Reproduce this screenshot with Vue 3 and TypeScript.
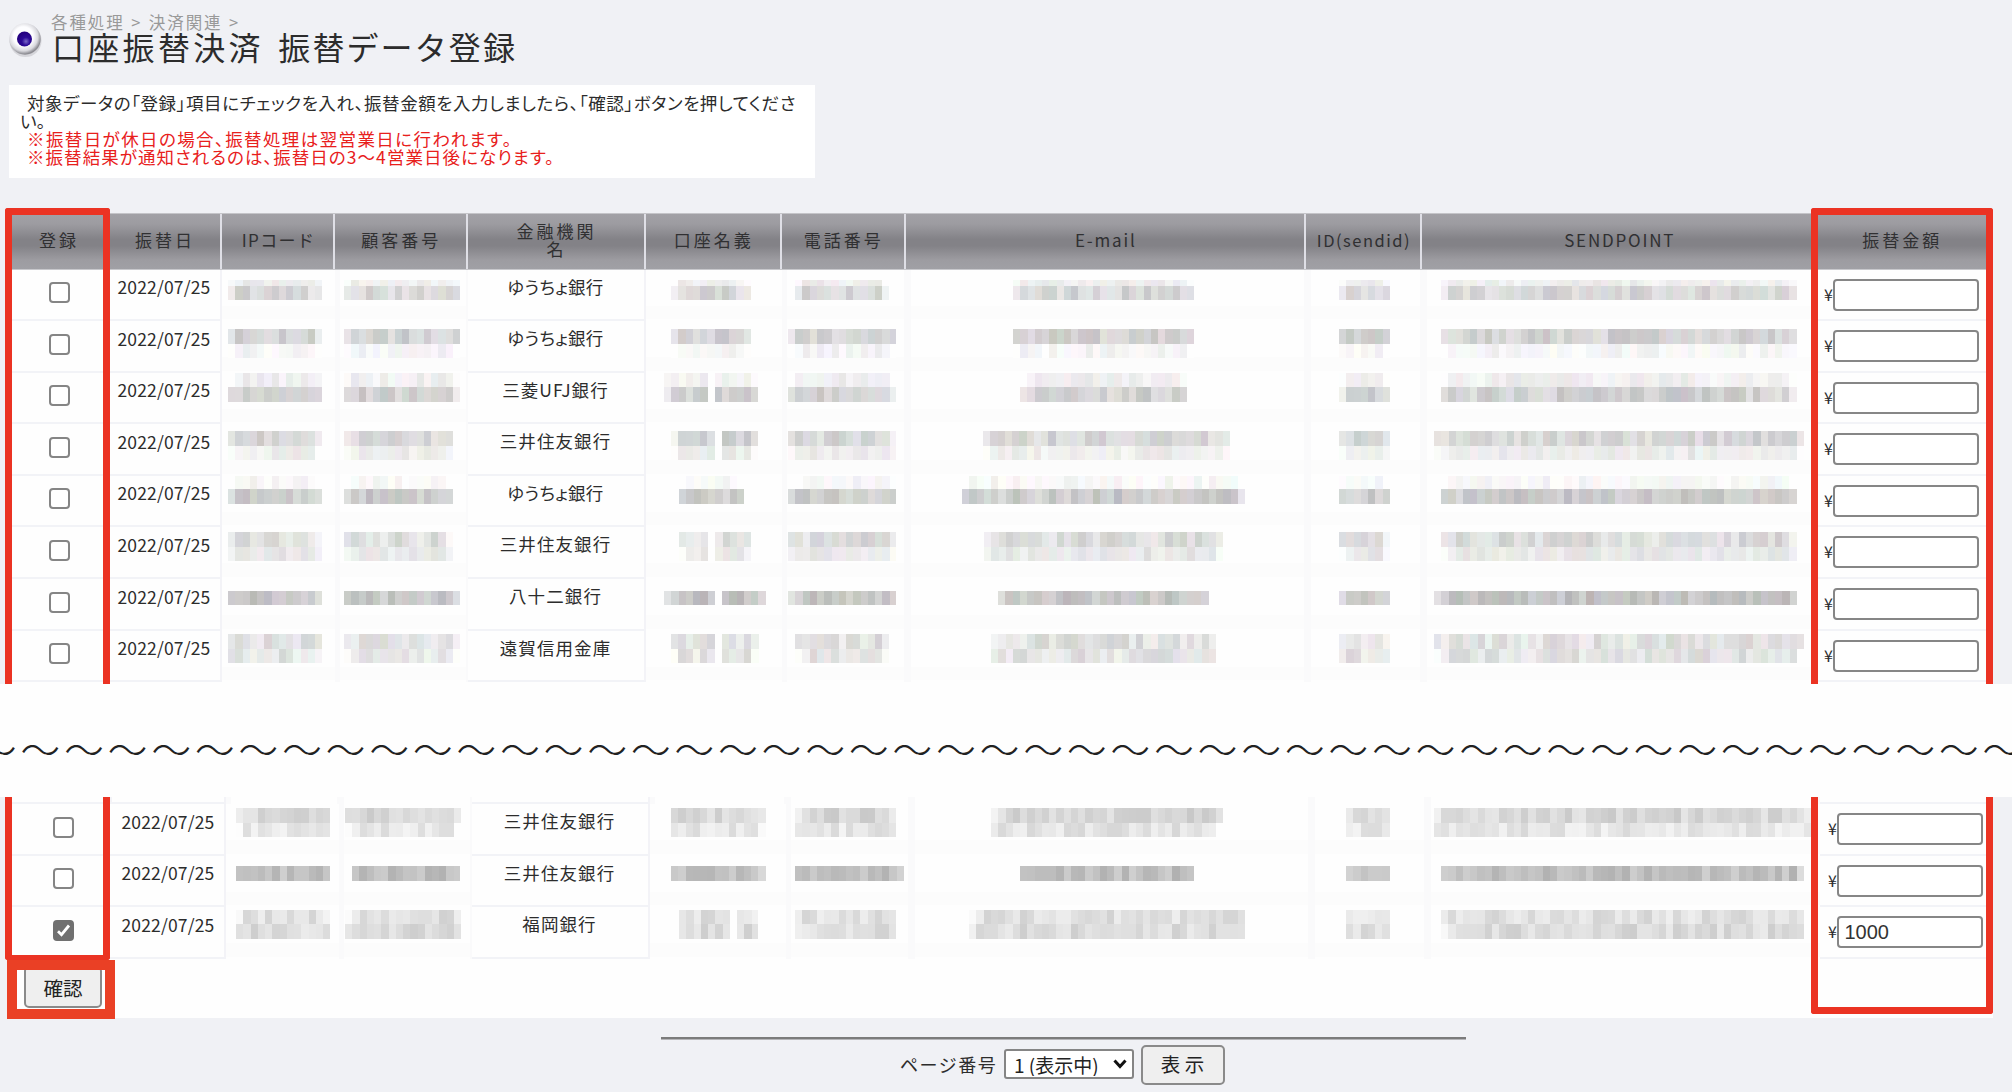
<script setup lang="ts">
import { ref } from 'vue'

type Strip = [start: number, cells: number, gap?: number]
interface Row {
  date: string
  bank: string
  checked: boolean
  amount: string
  offset: number
  bands: [height: number, level: number][]
  strips: Strip[]
}

const CELL = 7.26
const headers = ['登録', '振替日', 'IPコード', '顧客番号', '金融機関名', '口座名義', '電話番号', 'E-mail', 'ID(sendid)', 'SENDPOINT', '振替金額']
const stripEdges = [222, 335, 645.5, 782, 905.5, 1306, 1422]

const row = (bank: string, offset: number, bands: [number, number][], strips: Strip[], amount = ''): Row => ({
  date: '2022/07/25', bank, checked: amount !== '', amount, offset: Math.max(0, offset - 1), bands, strips,
})

const upper = ref<Row[]>([
  row('ゆうちょ銀行', 11.5, [[5.5, 238], [14.5, 216]], [[228, 13], [344.3, 16], [671.3, 11], [794.7, 13], [1012.5, 25], [1339, 7], [1441, 49]]),
  row('ゆうちょ銀行', 9, [[14.5, 211], [14.5, 245]], [[228, 13], [344.3, 16], [671.3, 11], [787.5, 15], [1012.5, 25], [1339, 7], [1441, 49]]),
  row('三菱UFJ銀行', 1.2, [[14.5, 240], [14.5, 211]], [[228, 13], [344.3, 16], [664, 13, 6], [787.5, 15], [1019.6, 23], [1339, 7], [1441, 49]]),
  row('三井住友銀行', 7.9, [[14.5, 215], [14.5, 237]], [[228, 13], [344.3, 15], [671.3, 12, 6], [787.5, 15], [983, 34], [1339, 7], [1433.6, 51]]),
  row('ゆうちょ銀行', 0.5, [[13.5, 247], [14.5, 204]], [[228, 13], [344.3, 15], [679, 9], [787.5, 15], [962, 39], [1339, 7], [1441, 49]]),
  row('三井住友銀行', 6, [[14.5, 221], [14.5, 232]], [[228, 13], [344.3, 15], [678.6, 10, 4], [787.5, 15], [983.5, 33], [1339, 7], [1441, 49]]),
  row('八十二銀行', 12.7, [[14.7, 198]], [[228, 13], [344.3, 16], [664, 14, 7], [787.5, 15], [998, 29], [1339, 7], [1433.6, 50]]),
  row('遠賀信用金庫', 4.4, [[14.5, 226], [14.5, 227]], [[228, 13], [344.3, 16], [671.4, 12, 6], [794.5, 13], [991, 31], [1339, 7], [1433.6, 51]]),
])

const lower = ref<Row[]>([
  row('三井住友銀行', 5.2, [[14.6, 215], [14.6, 229]], [[235.7, 13], [345, 16], [671.4, 13], [794.7, 14], [991, 32], [1346.4, 6], [1434, 52]]),
  row('三井住友銀行', 11.7, [[14.6, 192]], [[235.7, 13], [351.5, 15], [671.4, 13], [794.7, 15], [1020, 24], [1346.4, 6], [1441, 50]]),
  row('福岡銀行', 3.6, [[14.6, 224], [14.6, 220]], [[235.7, 13], [345, 16], [678.6, 11, 7], [794.7, 14], [969, 38], [1346.4, 6], [1441, 50]], '1000'),
])

function noise(n: number): number {
  const s = Math.sin(n * 12.9898) * 43758.5453
  return s - Math.floor(s)
}

function mosaic(strip: Strip, level: number, seed: number, tinted: boolean): string {
  const spread = level > 230 ? 7 : 15
  const stops: string[] = []
  for (let i = 0; i < strip[1]; i++) {
    const key = seed * 61 + i
    const base = Math.min(252, level + (noise(key) - 0.5) * 2 * spread)
    const ends = i === 0 || i === strip[1] - 1 ? 14 : 0
    const rgb = [1, 2, 3].map((c) => Math.round(Math.min(254, base + ends + (tinted ? (noise(key * 3 + c * 7) - 0.5) * 11 : 0))))
    const color = i === strip[2] ? 'transparent' : `rgb(${rgb.join(',')})`
    stops.push(`${color} ${(i * CELL).toFixed(2)}px ${((i + 1) * CELL).toFixed(2)}px`)
  }
  return `linear-gradient(90deg, ${stops.join(',')})`
}

function stripStyle(strip: Strip, col: number, shift: number) {
  return { marginLeft: `${strip[0] - stripEdges[col] - shift}px`, width: `${strip[1] * CELL}px` }
}

const sections = [
  { name: 'upper', rows: upper, shift: 0, tinted: true },
  { name: 'lower', rows: lower, shift: 4, tinted: false },
]
const wave = '〜'.repeat(47)
const page = ref('1')
</script>

<template>
  <div class="page">
    <header class="head">
      <svg class="bullet" viewBox="0 0 34 36" width="34" height="36">
        <defs>
          <radialGradient id="ball" cx="45%" cy="42%" r="56%">
            <stop offset="0.55" stop-color="#fdfdff" />
            <stop offset="0.82" stop-color="#d9d9de" />
            <stop offset="1" stop-color="#8d8d93" />
          </radialGradient>
          <radialGradient id="pupil" cx="60%" cy="66%" r="60%">
            <stop offset="0" stop-color="#7a68c8" />
            <stop offset="0.45" stop-color="#2c0a96" />
            <stop offset="1" stop-color="#240080" />
          </radialGradient>
        </defs>
        <ellipse cx="17.5" cy="18.5" rx="16" ry="16.5" fill="#c4c4ca" opacity=".6" />
        <circle cx="17" cy="17" r="15.7" fill="url(#ball)" />
        <circle cx="16.5" cy="17" r="7.5" fill="url(#pupil)" />
      </svg>
      <div class="titles">
        <div class="crumb">各種処理 &gt; 決済関連 &gt;</div>
        <h1>口座振替決済 <span>振替データ登録</span></h1>
      </div>
    </header>

    <div class="notice">
      <p class="first">対象データの「登録」項目にチェックを入れ、振替金額を入力しましたら、「確認」ボタンを押してくださ</p>
      <p class="rest">い。</p>
      <p class="warn w1">※振替日が休日の場合、振替処理は翌営業日に行われます。</p>
      <p class="warn w2">※振替結果が通知されるのは、振替日の3～4営業日後になります。</p>
    </div>

    <template v-for="(s, si) in sections" :key="s.name">
      <section class="sheet" :class="s.name">
        <div v-if="si === 0" class="grid thead">
          <div v-for="(h, hi) in headers" :key="h" class="th" :class="'h' + hi"><span>{{ h }}</span></div>
        </div>
        <div v-else class="grid tail"><div v-for="n in 11" :key="n" class="td" :class="{ veil: ![1, 2, 5, 11].includes(n) }"></div></div>
        <div v-for="(r, ri) in s.rows.value" :key="ri" class="grid tr">
          <div class="td check"><input v-model="r.checked" type="checkbox" /></div>
          <div class="td date">{{ r.date }}</div>
          <template v-for="(st, ci) in r.strips" :key="ci">
            <div v-if="ci === 2" class="td bank"><span :class="{ kana: r.bank.startsWith('ゆ') }">{{ r.bank }}</span></div>
            <div class="td veil" :class="'v' + ci">
              <div class="strip" :style="stripStyle(st, ci, s.shift)">
                <div class="pad" :style="{ height: r.offset + 'px' }"></div>
                <div
                  v-for="(b, bi) in r.bands"
                  :key="bi"
                  class="band"
                  :style="{ height: b[0] + 'px', backgroundImage: mosaic(st, b[1], si * 97 + ri * 17 + ci * 5 + bi * 2 + 1, s.tinted) }"
                ></div>
              </div>
            </div>
          </template>
          <div class="td amount"><span>¥</span><input v-model="r.amount" type="text" /></div>
        </div>
        <div v-if="si === 1" class="submit"><button type="button">確認</button></div>
        <i class="mark left"></i>
        <i class="mark right"></i>
        <i v-if="si === 1" class="mark confirm"></i>
      </section>
      <div v-if="si === 0" class="wave">{{ wave }}</div>
    </template>

    <footer>
      <div class="rule"></div>
      <div class="pager">
        <label>ページ番号</label>
        <div class="select">
          <select v-model="page"><option value="1">1 (表示中)</option></select>
          <svg viewBox="0 0 16 12" width="16" height="12"><path d="M2.5 2.5 8 8.5l5.500-6" fill="none" stroke="#111" stroke-width="3" /></svg>
        </div>
        <button type="button">表 示</button>
      </div>
    </footer>
  </div>
</template>

<style>
body {
  margin: 0;
  background: #f0f1f5;
}
</style>

<style scoped>
.page {
  width: 2012px;
  height: 1092px;
  overflow: hidden;
  display: flex;
  flex-direction: column;
  background: #f0f1f5;
  color: #2c2c2c;
  font-family: "Noto Sans CJK JP", sans-serif;
  font-size: 17.5px;
  box-sizing: border-box;
}
.page *, .page *::before { box-sizing: border-box; }
p, h1 { margin: 0; font-weight: 400; white-space: nowrap; }
.head { display: flex; height: 84.5px; padding-left: 8px; flex: none; }
.bullet { margin-top: 22px; }
.titles { padding: 11px 0 0 9px; }
.crumb { height: 20px; line-height: 22px; font-size: 16.5px; letter-spacing: 1.9px; word-spacing: 1px; color: #999; white-space: pre; }
h1 { font-size: 32px; line-height: 31px; letter-spacing: 3.3px; padding-left: 1px; }
h1 span { margin-left: 4px; letter-spacing: 2.1px; }
.notice {
  flex: none;
  width: 806px;
  height: 93.5px;
  margin: 0 0 34.5px 9px;
  padding: 9px 0 0 18px;
  background: #fff;
  line-height: 18px;
  font-feature-settings: "palt";
}
.first { letter-spacing: 0.57px; }
.rest { margin-left: -7px; }
.warn { color: #e8201c; }
.w1 { letter-spacing: 1.4px; }
.w2 { letter-spacing: 1.05px; }

.sheet { position: relative; flex: none; margin-left: 8px; background: #fefefe; }
.upper { width: 1982px; height: 471.5px; }
.lower { width: 1985px; height: 221px; padding-left: 4px; }
.grid {
  display: grid;
  grid-template-columns: 100px 114px 113px 132.5px 178px 136.5px 123.5px 400.5px 116px 393.5px 1fr;
}
.thead { height: 57px; border-top: 1px solid #c4c4c8; border-bottom: 1px solid #c8c8cc; }
.th {
  display: flex;
  align-items: center;
  justify-content: center;
  text-align: center;
  padding: 0 0 2px 2px;
  line-height: 18px;
  font-size: 17px;
  letter-spacing: 3px;
  color: #303032;
  border-right: 2px solid #dfdfe6;
  background: linear-gradient(#a2a1a6 0, #9d9ca1 18%, #838287 46%, #838287 58%, #9d9ca1 84%, #a0a0a5 100%);
}
.h0, .h9, .h10 { border-right: 0; }
.h2 { letter-spacing: 1.4px; }
.h4 span { width: 84px; }
.h7, .h9 { letter-spacing: 1.8px; }
.h8 { letter-spacing: 1.5px; font-size: 16.5px; }
.h10 { padding-right: 3px; }
.tr { height: 51.6px; }
.tail { height: 7px; }
.td { position: relative; border-bottom: 2px solid #f2f3f7; border-right: 2px solid #f3f3f7; min-width: 0; }
.check, .amount { border-right: 0; }
.veil {
  border-color: transparent;
  background: linear-gradient(90deg, #fafafb 0 5px, transparent 5px), linear-gradient(transparent 0 36px, #fcfcfc 36px);
}
.v0, .v2 { background: linear-gradient(transparent 0 36px, #fcfcfc 36px); }
.v6 { border-right: 0; }
.check { padding: 12.5px 0 0 41px; }
.check input {
  appearance: none;
  display: block;
  width: 21px;
  height: 21px;
  margin: 0;
  border: 2px solid #858585;
  border-radius: 4px;
  background: #fff;
}
.check input:checked {
  border-color: #707070;
  background: #707070 url("data:image/svg+xml,%3Csvg xmlns='http://www.w3.org/2000/svg' viewBox='0 0 17 17'%3E%3Cpath d='M3 9.200l3.500 3.500L14 3.500' fill='none' stroke='white' stroke-width='2.800'/%3E%3C/svg%3E") center / 17px 17px no-repeat;
}
.date { padding: 5.5px 0 0 9.5px; line-height: 24px; letter-spacing: 0.15px; white-space: nowrap; }
.bank { display: flex; justify-content: center; padding-top: 5px; line-height: 24px; letter-spacing: 1.1px; }
.kana { font-feature-settings: "palt"; letter-spacing: 0.4px; }
.strip { display: flex; flex-direction: column; }
.pad, .band { flex: none; }
.amount { display: flex; padding: 9px 0 0 8.5px; }
.amount span { width: 8.5px; margin-top: 3px; font-size: 16px; line-height: 24px; }
.amount input {
  width: 146px;
  height: 32px;
  margin: 0;
  padding: 0 6px;
  border: 2px solid #868686;
  border-radius: 4px;
  background: #fff;
  color: #333;
  font: 20px "Liberation Sans", sans-serif;
}
button {
  margin: 0;
  padding: 0;
  border: 2px solid #8a8a8a;
  border-radius: 5px;
  background: #efefef;
  color: #222;
  font: 19.5px "Noto Sans CJK JP", sans-serif;
}
.submit { padding: 7.5px 0 0 12px; }
.submit button { display: block; width: 78px; height: 42px; }
.mark { position: absolute; pointer-events: none; border: 7px solid #eb3323; }
.upper .mark { top: -5px; bottom: 0; border-bottom: 0; border-radius: 3px 3px 0 0; }
.upper .left { left: -3px; width: 105px; }
.upper .right { left: 1803px; width: 182px; }
.lower .mark { top: 0; border-top: 0; border-radius: 0 0 3px 3px; }
.lower .left { left: -3px; width: 105px; height: 163px; border-bottom-width: 5px; }
.lower .right { left: 1803px; width: 182px; height: 216.5px; }
.lower .confirm {
  top: 163px;
  left: -1px;
  width: 108px;
  height: 59px;
  border: 10px solid #ea4025;
  border-radius: 0;
}
.wave {
  flex: none;
  height: 113px;
  line-height: 127px;
  overflow: hidden;
  background: #fefefe;
  color: #222;
  font-size: 39.5px;
  font-weight: 300;
  letter-spacing: 4.1px;
  white-space: nowrap;
  text-indent: -23px;
}
footer { display: flex; flex-direction: column; padding: 19px 0 0 661px; }
.rule { width: 805px; height: 3px; background: #7b7b7b; border-bottom: 1px solid #b5b5b8; }
.pager { display: flex; align-items: center; margin-top: 5px; padding-left: 239px; }
.pager label { width: 104px; margin-top: -3px; letter-spacing: 1.500px; white-space: nowrap; font-size: 18px; }
.select { position: relative; display: flex; margin-top: -2px; }
.select svg { position: absolute; right: 6px; top: 9px; }
select {
  appearance: none;
  width: 130px;
  height: 30px;
  margin: 0;
  padding: 0 0 1px 8px;
  border: 2px solid #858585;
  border-radius: 3px;
  background: #fff;
  color: #222;
  font: 19px "Noto Sans CJK JP", sans-serif;
}
.pager button { width: 84px; height: 40px; margin-left: 6.500px; padding-bottom: 3px; }
</style>
